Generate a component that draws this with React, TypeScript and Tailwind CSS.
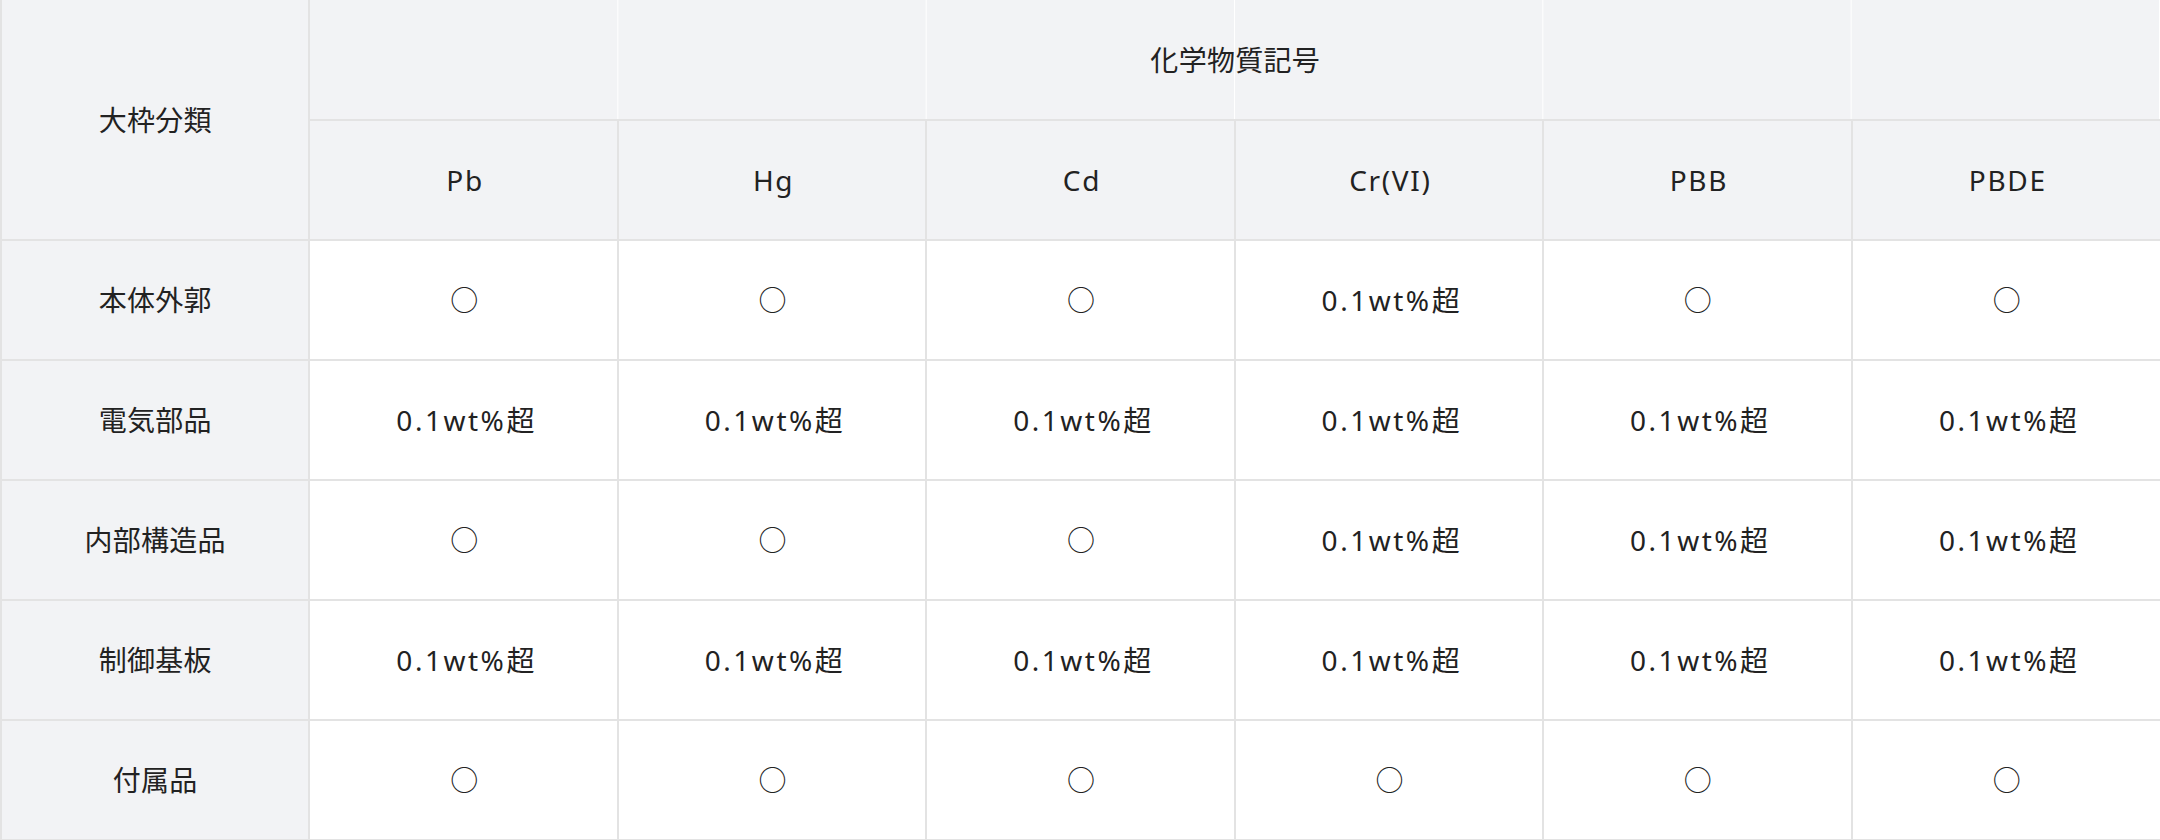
import React from "react";

const cols = ["Pb", "Hg", "Cd", "Cr(VI)", "PBB", "PBDE"];
const O = "○";
const X = "0.1wt%超";
const rows: [string, string[]][] = [
  ["本体外郭", [O, O, O, X, O, O]],
  ["電気部品", [X, X, X, X, X, X]],
  ["内部構造品", [O, O, O, X, X, X]],
  ["制御基板", [X, X, X, X, X, X]],
  ["付属品", [O, O, O, O, O, O]],
];

const font = { fontFamily: '"Noto Sans", "Noto Sans CJK JP", sans-serif' };

export default function App() {
  return (
    <div className="w-[2160px] h-[840px] overflow-hidden bg-white" style={font}>
      <table className="w-[2160px] table-fixed border-collapse text-[28px] text-[#222] font-normal">
        <thead>
          <tr className="h-[120px]">
            <th
              rowSpan={2}
              className="bg-[#f2f3f5] border-2 border-t-0 border-[#e3e3e3] font-normal text-center align-middle tracking-[0.01em]"
            >
              大枠分類
            </th>
            <th
              colSpan={6}
              className="bg-[#f2f3f5] border-2 border-t-0 border-r-0 border-[#e3e3e3] font-normal text-center align-middle tracking-[0.01em] [background-image:linear-gradient(to_left,#ffffff_1px,transparent_1px)] [background-size:16.6667%_100%]"
            >
              化学物質記号
            </th>
          </tr>
          <tr className="h-[120px]">
            {cols.map((c, i) => (
              <th
                key={c}
                className={
                  "bg-[#f2f3f5] border-2 border-[#e3e3e3] font-normal text-center align-middle tracking-[0.06em] pl-[3px]" +
                  (i === cols.length - 1 ? " border-r-0" : "")
                }
              >
                {c}
              </th>
            ))}
          </tr>
        </thead>
        <tbody>
          {rows.map(([label, vals]) => (
            <tr key={label} className="h-[120px]">
              <td className="bg-[#f2f3f5] border-2 border-[#e3e3e3] text-center align-middle tracking-[0.01em]">
                {label}
              </td>
              {vals.map((v, i) => (
                <td
                  key={i}
                  className={
                    "bg-white border-2 border-[#e3e3e3] text-center align-middle " +
                    (v === O ? "tracking-normal pl-[1px]" : "tracking-[0.09em] pl-[6px]") +
                    (i === vals.length - 1 ? " border-r-0" : "")
                  }
                >
                  {v}
                </td>
              ))}
            </tr>
          ))}
        </tbody>
      </table>
    </div>
  );
}
